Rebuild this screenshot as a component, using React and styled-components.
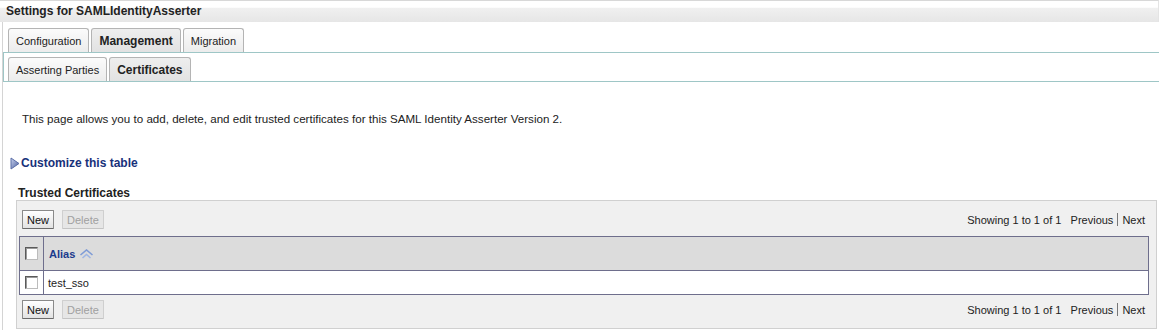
import styled, { createGlobalStyle } from "styled-components";

const GlobalStyle = createGlobalStyle`
    html, body {
        margin: 0;
        padding: 0;
        background: #ffffff;
    }
    body {
        font-family: "Liberation Sans", Arial, sans-serif;
        font-size: 11px;
        color: #222;
    }
`;

const Page = styled.div`
    width: 1159px;
    height: 330px;
    overflow: hidden;
`;

const TitleBar = styled.div`
    height: 21px;
    border-top: 1px solid #d8d8d8;
    border-right: 1px solid #e4e4e4;
    background: linear-gradient(
        #ffffff 0,
        #ffffff 30%,
        #f0f0f0 34%,
        #e6e6e6 100%
    );
    font-weight: bold;
    font-size: 12px;
    line-height: 21px;
    padding-left: 6px;
    color: #222;
`;

const Frame = styled.div`
    margin-left: 2px;
    border-left: 1px solid #d4d4d4;
    height: 308px;
`;

const TabRow = styled.div`
    display: flex;
    gap: 2px;
    padding: 6px 0 0 5px;
`;

const Tab = styled.div`
    height: 23px;
    padding: 0 ${p => p.$pad || 7}px;
    display: flex;
    align-items: center;
    border: 1px solid #b4b4b4;
    border-bottom: none;
    border-radius: 3px 3px 0 0;
    background: ${p =>
        p.$active
            ? "linear-gradient(#eeeeee, #e2e2e2)"
            : "linear-gradient(#fbfbfb, #ececec)"};
    font-weight: ${p => (p.$active ? "bold" : "normal")};
    font-size: ${p => (p.$active ? "12px" : "11px")};
    color: #222;
`;

const SubTabBar = styled.div`
    border-top: 1px solid #9ec6c6;
    border-bottom: 1px solid #9ec6c6;
    border-left: 1px solid #9ec6c6;
    padding: 4px 0 0 4px;
    display: flex;
    gap: 2px;
`;

const Content = styled.div`
    padding: 0 0 0 7px;
`;

const Intro = styled.p`
    margin: 30px 0 0 12px;
    line-height: 13px;
    font-size: 11.6px;
`;

const CustomizeLink = styled.div`
    margin-top: 31px;
    display: flex;
    align-items: center;
    gap: 1px;
    font-weight: bold;
    font-size: 12px;
    color: #18317a;
    height: 14px;
`;

const SectionTitle = styled.div`
    margin: 16px 0 0 8px;
    font-weight: bold;
    font-size: 12px;
    line-height: 14px;
`;

const Panel = styled.div`
    margin: 0 0 0 6px;
    width: 1139px;
    background: #f0f0f0;
    border: 1px solid #d0d0d0;
    padding: 9px 0 9px 0;
`;

const Toolbar = styled.div`
    display: flex;
    align-items: center;
    justify-content: space-between;
    padding: 0 11px 0 5px;
    height: 19px;
`;

const ButtonGroup = styled.div`
    display: flex;
    gap: 8px;
`;

const Btn = styled.button`
    height: 19px;
    padding: 0 4px;
    font-family: inherit;
    font-size: 11px;
    border: 1px solid ${p => (p.disabled ? "#cfcfcf" : "#8a8a8a")};
    border-bottom-color: ${p => (p.disabled ? "#c4c4c4" : "#6a6a6a")};
    border-radius: 1px;
    background: ${p =>
        p.disabled
            ? "#e6e6e6"
            : "linear-gradient(#ffffff, #e2e2e2)"};
    color: ${p => (p.disabled ? "#a0a0a0" : "#111")};
`;

const Paging = styled.div`
    display: flex;
    align-items: center;
    color: #222;
`;

const Sep = styled.span`
    display: inline-block;
    width: 1px;
    height: 13px;
    background: #777;
    margin: 0 4px;
`;

const Table = styled.table`
    margin: 7px 0 5px 2px;
    width: 1130px;
    border-collapse: collapse;
    background: #fff;
    border: 1px solid #6e6e8c;
`;

const Th = styled.th`
    height: 33px;
    background: #dcdcdc;
    border: 1px solid #6e6e8c;
    text-align: left;
    padding: 0 0 0 ${p => p.$pad || 5}px;
    width: ${p => p.$w || "auto"};
    font-weight: bold;
    color: #1b3a8c;
`;

const Td = styled.td`
    height: 23px;
    border: 1px solid #6e6e8c;
    padding: 0 0 0 ${p => p.$pad || 4}px;
    width: ${p => p.$w || "auto"};
`;

const Check = styled.span`
    display: block;
    width: 11px;
    height: 11px;
    border: 1px solid #5a5a5a;
    border-right-color: #bcbcbc;
    border-bottom-color: #bcbcbc;
    background: #fff;
    box-shadow: inset 1px 1px 0 #9a9a9a;
`;

const HeadLabel = styled.span`
    display: inline-flex;
    align-items: center;
    gap: 4px;
`;

const Triangle = () => (
    <svg width="10" height="13" viewBox="0 0 10 13">
        <defs>
            <linearGradient id="tri" x1="0" y1="0" x2="1" y2="1">
                <stop offset="0" stopColor="#c9d3ee" />
                <stop offset="1" stopColor="#4a5e9e" />
            </linearGradient>
        </defs>
        <path d="M1 1 L9 6.5 L1 12 Z" fill="url(#tri)" stroke="#5b6ea8" strokeWidth="1" />
    </svg>
);

const SortIcon = () => (
    <svg width="15" height="10" viewBox="0 0 15 10">
        <path d="M1.5 6 L7.5 1 L13.5 6" fill="none" stroke="#7e9bd6" strokeWidth="1.6" />
        <path d="M3.5 9 L7.5 5.5 L11.5 9" fill="none" stroke="#9fb6e4" strokeWidth="1.6" />
    </svg>
);

const TableToolbar = () => (
    <Toolbar>
        <ButtonGroup>
            <Btn>New</Btn>
            <Btn disabled>Delete</Btn>
        </ButtonGroup>
        <Paging>
            Showing 1 to 1 of 1&nbsp;&nbsp;&nbsp;Previous
            <Sep />
            Next
        </Paging>
    </Toolbar>
);

const App = () => {
    const rows = [{ id: 1, alias: "test_sso" }];

    return (
        <>
            <GlobalStyle />
            <Page>
                <TitleBar>Settings for SAMLIdentityAsserter</TitleBar>
                <Frame>
                    <TabRow>
                        <Tab $pad={7}>Configuration</Tab>
                        <Tab $pad={7} $active>Management</Tab>
                        <Tab $pad={7}>Migration</Tab>
                    </TabRow>
                    <SubTabBar>
                        <Tab $pad={7}>Asserting Parties</Tab>
                        <Tab $pad={7} $active>Certificates</Tab>
                    </SubTabBar>
                    <Content>
                        <Intro>
                            This page allows you to add, delete, and edit trusted
                            certificates for this SAML Identity Asserter Version 2.
                        </Intro>
                        <CustomizeLink>
                            <Triangle />
                            Customize this table
                        </CustomizeLink>
                        <SectionTitle>Trusted Certificates</SectionTitle>
                        <Panel>
                            <TableToolbar />
                            <Table>
                                <thead>
                                    <tr>
                                        <Th $w="18px" $pad={5}>
                                            <Check />
                                        </Th>
                                        <Th>
                                            <HeadLabel>
                                                Alias <SortIcon />
                                            </HeadLabel>
                                        </Th>
                                    </tr>
                                </thead>
                                <tbody>
                                    {rows.map(row => (
                                        <tr key={row.id}>
                                            <Td $w="18px" $pad={5}>
                                                <Check />
                                            </Td>
                                            <Td>{row.alias}</Td>
                                        </tr>
                                    ))}
                                </tbody>
                            </Table>
                            <TableToolbar />
                        </Panel>
                    </Content>
                </Frame>
            </Page>
        </>
    );
};

export default App;
